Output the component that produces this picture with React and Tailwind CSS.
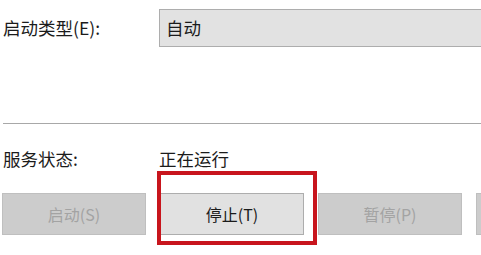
import React from "react";

const font = { fontFamily: '"Noto Sans CJK SC", "Noto Sans", sans-serif' };

function App() {
  return (
    <div
      className="relative w-[481px] h-[255px] bg-white overflow-hidden text-[17.5px] text-[#1b1b1b]"
      style={font}
    >
      <div className="flex items-center pt-[9px] pl-[3px]">
        <div className="w-[156px] shrink-0 leading-none">启动类型(E):</div>
        <div className="w-[360px] shrink-0 h-[38px] bg-[#e2e2e2] border border-[#adadad] flex items-center pl-[6px] leading-none">
          自动
        </div>
      </div>

      <div className="mt-[76px] ml-[3px] h-px bg-[#a8a8a8]"></div>

      <div className="flex items-center pl-[3px] mt-[26px] leading-none">
        <div className="w-[156px] shrink-0">服务状态:</div>
        <div>正在运行</div>
      </div>

      <div className="flex gap-[14px] pl-[2px] mt-[25px]">
        <button className="w-[144px] shrink-0 h-[42px] bg-[#cccccc] border border-[#bfbfbf] text-[#a3a3a3] text-[16px] leading-none">
          启动(S)
        </button>
        <button className="w-[144px] shrink-0 h-[42px] bg-[#e1e1e1] border border-[#adadad] text-[#1b1b1b] text-[16px] leading-none">
          停止(T)
        </button>
        <button className="w-[144px] shrink-0 h-[42px] bg-[#cccccc] border border-[#bfbfbf] text-[#a3a3a3] text-[16px] leading-none">
          暂停(P)
        </button>
        <div className="w-[144px] shrink-0 h-[42px] bg-[#cccccc] border border-[#bfbfbf]"></div>
      </div>

      <div className="absolute left-[157px] top-[171px] w-[160px] h-[74px] border-[4px] border-[#c8151d] pointer-events-none"></div>
    </div>
  );
}

export default App;
